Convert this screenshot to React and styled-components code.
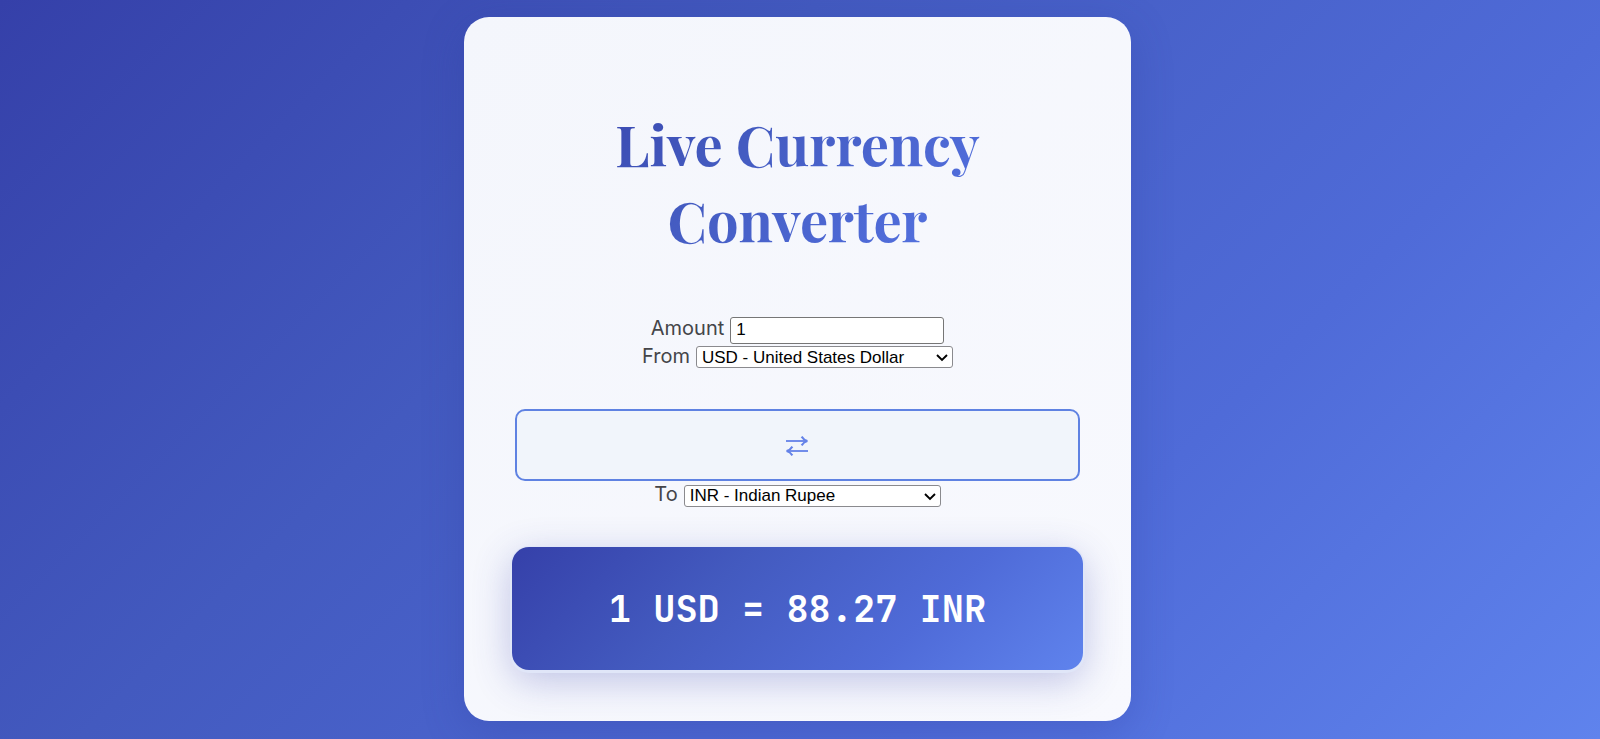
import React, { useState } from 'react';
import styled, { createGlobalStyle } from 'styled-components';

const GlobalStyle = createGlobalStyle`
  * { box-sizing: border-box; }
  body {
    margin: 0;
    font-family: Inter, "Liberation Sans", sans-serif;
    color: #444549;
  }
`;

const brandGradient =
  'linear-gradient(135deg, #3540a9 0%, #435abf 35%, #4f6bd8 70%, #5f83ed 100%)';

const Page = styled.main`
  min-height: 100vh;
  display: flex;
  align-items: center;
  justify-content: center;
  padding: 14px 21px 16px 16px;
  background: ${brandGradient};
`;

const Card = styled.section`
  width: 100%;
  max-width: 667px;
  padding: 51px;
  border-radius: 25px;
  background: linear-gradient(135deg, #f4f6fc, #f8f9fe);
  box-shadow: 0 10px 40px rgba(48, 63, 159, 0.3);
`;

const Title = styled.h1`
  margin: 38px 0 59px;
  padding: 0 50px;
  font-family: "Playfair Display", "Liberation Serif", serif;
  font-size: 56px;
  font-weight: 700;
  line-height: 76px;
  text-align: center;
  color: transparent;
  background: ${brandGradient};
  background-clip: text;
  -webkit-background-clip: text;
`;

const Field = styled.div`
  display: flex;
  align-items: baseline;
  justify-content: center;
  gap: 6px;
  margin-top: 1px;
`;

const Label = styled.label`
  font-size: 20px;
  line-height: 22px;
`;

const AmountInput = styled.input`
  width: 214px;
  height: 27px;
  padding: 0 5px;
  border: 1px solid #767676;
  border-radius: 3px;
  background: #fff;
  color: #000;
  font: 17px "Liberation Sans", Arial, sans-serif;
`;

const SelectBox = styled.div`
  position: relative;
  display: flex;
`;

const CurrencySelect = styled.select`
  appearance: none;
  width: 257px;
  height: 22px;
  padding: 0 5px;
  border: 1px solid #8a8a8e;
  border-radius: 3px;
  background-color: #fff;
  color: #000;
  font: 17px "Liberation Sans", Arial, sans-serif;
`;

const Chevron = styled.svg`
  position: absolute;
  top: 8px;
  right: 5px;
  pointer-events: none;
`;

const SwapButton = styled.button`
  display: flex;
  align-items: center;
  justify-content: center;
  width: 100%;
  height: 72px;
  margin: 41px 0 2px;
  padding: 2px 0 0;
  border: 2px solid #5f82e2;
  border-radius: 10px;
  background: #f1f5fb;
  color: #6482e8;
  cursor: pointer;
`;

const Result = styled.output`
  display: flex;
  align-items: center;
  justify-content: center;
  height: 123px;
  margin: 40px -3px 0;
  border-radius: 17px;
  background: ${brandGradient};
  box-shadow: 0 1px 0 2px #e0e6f8, 0 10px 38px rgba(53, 64, 169, 0.3);
  color: #fff;
  font-family: "JetBrains Mono", "DejaVu Sans Mono", monospace;
  font-size: 37px;
  font-weight: 700;
`;

const CURRENCIES = [
  { code: 'USD', name: 'United States Dollar', perDollar: 1 },
  { code: 'INR', name: 'Indian Rupee', perDollar: 88.27 },
];

function CurrencyField({ id, label, value, onChange }) {
  return (
    <Field>
      <Label htmlFor={id}>{label}</Label>
      <SelectBox>
        <CurrencySelect id={id} value={value} onChange={(e) => onChange(e.target.value)}>
          {CURRENCIES.map(({ code, name }) => (
            <option key={code} value={code}>{`${code} - ${name}`}</option>
          ))}
        </CurrencySelect>
        <Chevron width="12" height="8" viewBox="0 0 12 8" fill="none" stroke="#000" strokeWidth="1.9" aria-hidden="true">
          <path d="M1 1L6 6L11 1" />
        </Chevron>
      </SelectBox>
    </Field>
  );
}

function SwapIcon() {
  return (
    <svg width="24" height="20" viewBox="0 0 24 20" fill="none" stroke="currentColor" strokeWidth="1.8" aria-hidden="true">
      <path d="M0 5H21" />
      <path d="M15.6 0.6C17 2.8 18.8 4.4 21.4 5C18.8 5.6 17 7.2 15.6 9.4" strokeWidth="2" />
      <path d="M22 15H1" />
      <path d="M6.4 10.6C5 12.8 3.2 14.4 0.6 15C3.2 15.6 5 17.2 6.4 19.4" strokeWidth="2" />
    </svg>
  );
}

export default function App() {
  const [amount, setAmount] = useState('1');
  const [from, setFrom] = useState('USD');
  const [to, setTo] = useState('INR');

  const rateOf = (code) => CURRENCIES.find((c) => c.code === code).perDollar;
  const converted = ((Number(amount) * rateOf(to)) / rateOf(from)).toFixed(2);

  const swap = () => {
    setFrom(to);
    setTo(from);
  };

  return (
    <>
      <GlobalStyle />
      <Page>
        <Card>
          <Title>Live Currency Converter</Title>
          <Field>
            <Label htmlFor="amount">Amount</Label>
            <AmountInput id="amount" inputMode="decimal" value={amount} onChange={(e) => setAmount(e.target.value)} />
          </Field>
          <CurrencyField id="from" label="From" value={from} onChange={setFrom} />
          <SwapButton type="button" aria-label="Swap currencies" onClick={swap}>
            <SwapIcon />
          </SwapButton>
          <CurrencyField id="to" label="To" value={to} onChange={setTo} />
          <Result>{`${amount} ${from} = ${converted} ${to}`}</Result>
        </Card>
      </Page>
    </>
  );
}
